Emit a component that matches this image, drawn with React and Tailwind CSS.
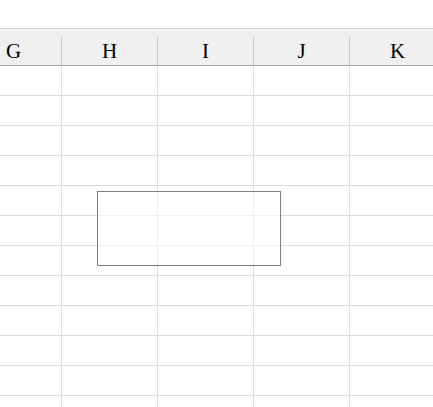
const columns = ["G", "H", "I", "J", "K"];
const rows = Array.from({ length: 12 }, (_, i) => i);

export default function App() {
  return (
    <div className="relative h-[407px] w-[433px] overflow-hidden bg-white pt-[28px] font-['Liberation_Serif',serif]">
      {/* column header */}
      <div className="ml-[-34px] flex h-[38px] border-y border-t-[#d5d5d5] border-b-[#ababab] bg-[#f0f0f0]">
        {columns.map((c) => (
          <div key={c} className="flex w-[96px] shrink-0 flex-col justify-end">
            <div className="flex h-[28px] items-center justify-center border-r border-[#c6c6c6] text-[21px] leading-none text-black">
              <span className="mt-[0px]">{c}</span>
            </div>
          </div>
        ))}
      </div>

      {/* grid body */}
      <div className="ml-[-34px]">
        {rows.map((r) => (
          <div key={r} className="flex h-[30px] border-b border-[#dedede]">
            {columns.map((c) => (
              <div key={c} className="w-[96px] shrink-0 border-r border-[#dedede]" />
            ))}
          </div>
        ))}
      </div>

      {/* selection box */}
      <div className="absolute left-[97px] top-[191px] h-[75px] w-[184px] border border-[#7f7f7f] bg-white/50" />
    </div>
  );
}
